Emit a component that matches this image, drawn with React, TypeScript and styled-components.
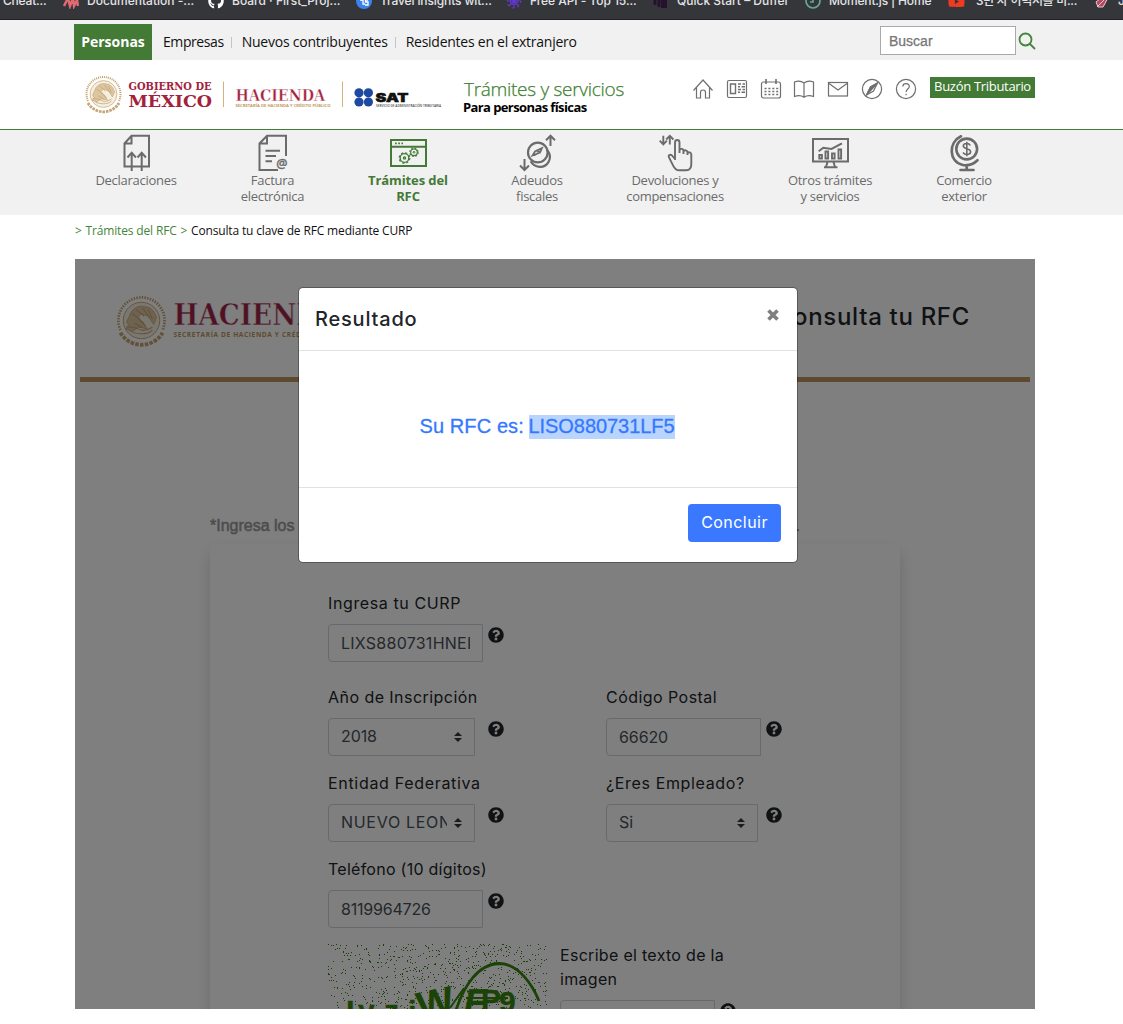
import React from 'react';
import styled, { createGlobalStyle } from 'styled-components';
import { FaGithub, FaQuestionCircle, FaYoutube } from 'react-icons/fa';

const sans = '"Open Sans", "Noto Sans", sans-serif';
const geometric = 'Inter, sans-serif';
const helvetica = '"Liberation Sans", Arial, sans-serif';
const green = '#437a36';

const Global = createGlobalStyle`
  *, *::before, *::after { box-sizing: border-box; }
  body { margin: 0; background: #fff; }
  svg { display: block; flex: none; }
`;

const Page = styled.div`
  width: 1123px;
  height: 1024px;
  overflow: hidden;
  font-family: ${sans};
  color: #111;
`;

/* ---------- bookmarks ---------- */
const Bookmarks = styled.div`
  height: 20px;
  overflow: hidden;
  display: flex;
  align-items: flex-start;
  background: #35363a;
  border-bottom: 1px solid #231f22;
`;
const Bookmark = styled.div<{ $w: number; $ls?: number }>`
  flex: none;
  width: ${p => p.$w}px;
  height: 18px;
  margin-top: -8px;
  display: flex;
  align-items: center;
  gap: 8px;
  white-space: nowrap;
  color: #e3e4e6;
  font: 500 12px/18px Inter, "Noto Sans CJK KR", sans-serif;
  letter-spacing: ${p => p.$ls ?? 0}px;
`;

/* ---------- top bar ---------- */
const Wrap = styled.div`
  width: 960px;
  margin-left: 75px;
`;
const TopBar = styled.div`
  height: 40px;
  background: #f1f1f1;
`;
const TopInner = styled(Wrap)`
  height: 40px;
  display: flex;
  align-items: flex-end;
  width: 962px;
  margin-left: 74px;
`;
const ActiveTab = styled.div`
  width: 78px;
  height: 36px;
  background: ${green};
  color: #fff;
  font-weight: 700;
  font-size: 14px;
  line-height: 36px;
  text-align: center;
`;
const Links = styled.div`
  display: flex;
  align-items: center;
  height: 36px;
  margin-left: 11px;
  flex: 1;
`;
const TopLink = styled.a<{ $ls: number }>`
  font-size: 14px;
  line-height: 36px;
  letter-spacing: ${p => p.$ls}px;
  white-space: nowrap;
`;
const Divider = styled.i`
  width: 1px;
  height: 11px;
  margin: 0 10px 0 7px;
  background: #c4c4c4;
`;
const Search = styled.div`
  height: 36px;
  display: flex;
  align-items: flex-start;
  padding-top: 2px;
  gap: 2px;
`;
const SearchBox = styled.div`
  width: 136px;
  height: 29px;
  border: 1px solid #a9a9a9;
  background: #fff;
  color: #757575;
  padding: 1px 0 0 8px;
  font: 14px/27px ${helvetica};
  -webkit-text-stroke: 0.25px #757575;
`;
const SearchIcon = styled.svg`
  margin-top: 6px;
`;

/* ---------- header ---------- */
const Header = styled.header`
  height: 70px;
  border-bottom: 1px solid ${green};
`;
const HeaderInner = styled(Wrap)`
  display: flex;
  height: 69px;
`;
const SectionTitle = styled.div`
  width: 241px;
  padding: 18px 0 0 13px;
`;
const Title = styled.div`
  color: #3f7f33;
  font-size: 19px;
  font-weight: 300;
  line-height: 22px;
  letter-spacing: -0.29px;
  -webkit-text-stroke: 0.25px #3f7f33;
`;
const Subtitle = styled.div`
  margin-left: -1px;
  font-size: 13px;
  line-height: 15px;
  font-weight: 700;
  letter-spacing: -0.6px;
  color: #000;
`;
const Tools = styled.div`
  display: flex;
  gap: 11.8px;
  padding-top: 18px;
`;
const Mailbox = styled.div`
  width: 105px;
  height: 21px;
  margin: 17px 0 0 auto;
  background: ${green};
  color: #fff;
  font-size: 13px;
  line-height: 19px;
  letter-spacing: -0.3px;
  text-align: center;
  white-space: nowrap;
`;

/* ---------- section nav ---------- */
const Nav = styled.nav`
  height: 85px;
  background: #f1f1f1;
  padding: 4px 0 0 75px;
  display: flex;
`;
const NavItem = styled.div<{ $w: number; $active?: boolean }>`
  width: ${p => p.$w}px;
  display: flex;
  flex-direction: column;
  align-items: center;
  text-align: center;
  white-space: pre-line;
  font-size: 13px;
  line-height: 16px;
  letter-spacing: ${p => (p.$active ? -0.1 : -0.28)}px;
  font-weight: ${p => (p.$active ? 700 : 400)};
  color: ${p => (p.$active ? green : '#6b6b6b')};
`;
const Breadcrumb = styled.div`
  height: 44px;
  padding: 7px 0 0 75px;
  display: flex;
  gap: 3.8px;
  font-size: 12px;
  line-height: 17px;
  letter-spacing: -0.15px;
`;
const Crumb = styled.span<{ $link?: boolean }>`
  color: ${p => (p.$link ? '#43853a' : '#111')};
  white-space: nowrap;
`;

/* ---------- embedded application ---------- */
const Frame = styled(Wrap)`
  height: 750px;
  position: relative;
  overflow: hidden;
  background: #fff;
`;
const Brand = styled.div`
  height: 118px;
  display: flex;
  justify-content: space-between;
  align-items: flex-start;
  padding: 32px 65px 0 38px;
`;
const AppTitle = styled.div`
  margin-top: 11px;
  font: 500 24px/30px ${geometric};
  letter-spacing: 0.69px;
  color: #212529;
`;
const GoldRule = styled.div`
  height: 5px;
  margin: 0 5px;
  background: #bc955c;
`;
const Note = styled.div`
  display: flex;
  justify-content: space-between;
  width: 590px;
  margin: 134px 0 0 135px;
  height: 28px;
  color: #989898;
  font: 16px/20px ${helvetica};
  -webkit-text-stroke: 0.5px #989898;
`;
const Card = styled.div`
  width: 690px;
  height: 600px;
  margin-left: 135px;
  padding: 47px 0 0 118px;
  border-radius: 5px;
  background: #fff;
  box-shadow: 0 8px 16px rgba(0, 0, 0, 0.15);
`;
const Row = styled.div<{ $gap: number }>`
  display: flex;
  margin-bottom: ${p => p.$gap}px;
`;
const Field = styled.div`
  width: 278px;
`;
const Label = styled.div<{ $ls: number }>`
  margin-bottom: 9px;
  font: 16px/24px ${geometric};
  letter-spacing: ${p => p.$ls}px;
  color: #212529;
`;
const Control = styled.div`
  display: flex;
  width: 176px;
  justify-content: space-between;
  align-items: flex-start;
  color: #212529;
`;
const Box = styled.div<{ $w: number; $ls?: number; $select?: boolean }>`
  width: ${p => p.$w}px;
  height: 38px;
  padding: 0 12px;
  display: flex;
  align-items: center;
  justify-content: space-between;
  gap: 7px;
  border: 1px solid #ced4da;
  border-radius: 4px 0 0 4px;
  font: 16px/${p => (p.$select ? 34 : 36)}px ${geometric};
  letter-spacing: ${p => p.$ls ?? 0}px;
  color: #495057;
`;
const Value = styled.span`
  align-self: flex-start;
  overflow: hidden;
  white-space: nowrap;
  min-width: 0;
`;
const Help = styled(FaQuestionCircle)`
  margin-top: 3px;
`;
const Captcha = styled.svg`
  margin: 1px 12px 0 0;
`;

/* ---------- dialog ---------- */
const Backdrop = styled.div`
  position: absolute;
  inset: 0;
  background: rgba(0, 0, 0, 0.5);
  padding: 28px 0 0 223px;
`;
const Dialog = styled.div`
  width: 500px;
  height: 276px;
  border: 1px solid rgba(0, 0, 0, 0.3);
  border-radius: 5px;
  background: #fff;
  background-clip: padding-box;
  display: flex;
  flex-direction: column;
`;
const DialogHead = styled.div`
  height: 63px;
  display: flex;
  justify-content: space-between;
  padding: 16px 18px 0 16px;
  border-bottom: 1px solid #dee2e6;
  font: 500 20px/30px ${geometric};
  letter-spacing: 0.8px;
  color: #212529;
`;
const Close = styled.svg`
  margin-top: 5px;
`;
const DialogBody = styled.div`
  height: 136px;
  display: flex;
  justify-content: center;
  align-items: flex-start;
  padding: 64px 2px 0 0;
  color: #3578ff;
  font: 20px/23px ${helvetica};
  -webkit-text-stroke: 0.3px #3578ff;
`;
const Prefix = styled.span`
  width: 109px;
  letter-spacing: 0.1px;
  white-space: pre;
`;
const Selected = styled.mark`
  width: 146px;
  height: 24px;
  background: #b9d5fe;
  color: inherit;
  letter-spacing: -0.06px;
`;
const DialogFoot = styled.div`
  flex: 1;
  border-top: 1px solid #dee2e6;
  padding: 16px;
  display: flex;
  justify-content: flex-end;
`;
const Primary = styled.button`
  width: 93px;
  height: 38px;
  border: 0;
  padding: 0 0 2px;
  border-radius: 4px;
  background: #3a79ff;
  color: #fff;
  font: 16px/36px ${geometric};
  letter-spacing: 0.45px;
`;

/* ---------- drawings ---------- */
const serif = '"DejaVu Serif Condensed", "DejaVu Serif", serif';

function Seal() {
  return (
    <g fill="none" stroke="#c6a573">
      <path d="M-15.500 7A17 17 0 1 1 15.500 7" strokeWidth="2" strokeDasharray="1.100 0.900" />
      <path d="M-15.500 9A18 18 0 0 0 15.500 9" strokeWidth="2.800" strokeDasharray="2.600 0.900" />
      <circle r="13.400" fill="#f5eee2" strokeWidth="0.700" />
      <path d="M-9-3c1-5 7-9 12-7 4 0 7 4 8 8l-2 5-4-6-5-2-3 3 4 3 3 5-6-1-5 3-5-2 3-2-2-3z" fill="#dcc6a0" strokeWidth="0.600" />
      <path d="M-11 4c3 2 5 0 8 2s6 2 11-1M-8 8c4 2 12 3 16-1M-7-5l6 4M-4-8l6 5M1-9l5 7M5-8l3 7M-5 2l5 3M-2-1l5 5" strokeWidth="0.800" />
    </g>
  );
}

function GovLogos() {
  return (
    <svg width="376" height="68" viewBox="75 60 376 68">
      <g transform="translate(103.5 94)"><Seal /></g>
      <g fill="#a3213c" fontFamily={serif} fontWeight="700">
        <text x="128.5" y="89.5" fontSize="11" textLength="83" lengthAdjust="spacingAndGlyphs">GOBIERNO DE</text>
        <text x="128.5" y="106.5" fontSize="17.500" textLength="83.500" lengthAdjust="spacingAndGlyphs">MÉXICO</text>
        <text x="235.5" y="101" fontSize="16.500" textLength="89.500" lengthAdjust="spacingAndGlyphs" stroke="#fff" strokeWidth="0.400">HACIENDA</text>
      </g>
      <text x="235.5" y="106.500" fontSize="3.800" fontWeight="700" fill="#c19a5c" fontFamily="Open Sans" textLength="95" lengthAdjust="spacingAndGlyphs">SECRETARÍA DE HACIENDA Y CRÉDITO PÚBLICO</text>
      <path d="M223.500 81.500V107M342.500 81.500V107" stroke="#d3b27c" />
      <g fill="#1d4aa0">
        <circle cx="359" cy="92.800" r="4.600" /><circle cx="368.400" cy="92.800" r="4.600" />
        <circle cx="359" cy="102" r="4.600" /><circle cx="368.400" cy="102" r="4.600" />
      </g>
      <text x="375.500" y="101.800" fontSize="12" fontWeight="900" fill="#111" stroke="#111" strokeWidth="0.500" fontFamily="Inter" textLength="33" lengthAdjust="spacingAndGlyphs">SAT</text>
      <text x="376" y="106.500" fontSize="2.800" fontWeight="600" fill="#444" fontFamily="Open Sans" textLength="65" lengthAdjust="spacingAndGlyphs">SERVICIO DE ADMINISTRACIÓN TRIBUTARIA</text>
    </svg>
  );
}

function TreasuryLogo() {
  return (
    <svg width="240" height="60" viewBox="113 291 240 60">
      <g transform="translate(141.500 320.500) scale(1.360)"><Seal /></g>
      <text x="173.500" y="325" fontSize="30" fontWeight="700" fill="#9d2449" stroke="#fff" strokeWidth="0.500" fontFamily={serif} textLength="166" lengthAdjust="spacingAndGlyphs">HACIENDA</text>
      <text x="173.500" y="337" fontSize="6.600" fontWeight="700" fill="#bc955c" fontFamily="Open Sans" textLength="176" lengthAdjust="spacing">SECRETARÍA DE HACIENDA Y CRÉDITO PÚBLICO</text>
    </svg>
  );
}

const toolIcons: React.ReactNode[] = [
  <path d="M1.500 12.500 11 2l9.500 10.500M4.500 9.500V20h4v-5.500a2.500 2.500 0 0 1 5 0V20h4V9.500" />,
  <><rect x="1.500" y="2.500" width="19" height="17" rx="1.500" /><path d="M4.500 6h5v9.500h-5zM12 6h3m1.500 0H19M12 8.800h2m1.500 0H19M12 11.500h3m1.500 0H19M12 14.200h2m1.500 0H19" strokeWidth="1.400" /></>,
  <><rect x="1.500" y="4" width="19" height="16" rx="2" /><path d="M6 1v5M16 1v5" strokeWidth="1.600" /><path d="M4.500 10.500h14M4.500 13.500h14M4.500 16.500h14" strokeWidth="1.700" strokeDasharray="2 1.900" /></>,
  <path d="M11 5C8 2.700 4 3 1.500 4v14.500c3-1 7-1 9.500.800 2.500-1.800 6.500-1.800 9.500-.800V4C18 3 14 2.700 11 5zM11 5v14" />,
  <><rect x="1.500" y="4.500" width="19" height="13.500" /><path d="m2 5.500 9 6.500 9-6.500" /></>,
  <><circle cx="11" cy="11" r="9.600" /><path d="M16.500 5 12.500 13 5.500 17 9.500 9z" /><path d="M16.500 5 9.500 9l-4 8 5.500-6z" fill="#6f6f6f" /></>,
  <><circle cx="11" cy="11" r="9.600" /><path d="M7.800 8.500c.2-4 6.600-3.800 6.500 0-.1 2.500-3.200 2.500-3.200 5.500M11.100 15.700v1.500" /></>,
];

function ToolIcon({ children }: { children: React.ReactNode }) {
  return <svg width="22" height="22" viewBox="0 0 22 22" fill="none" stroke="#6f6f6f" strokeWidth="1.200">{children}</svg>;
}

interface Section { label: string; width: number; active?: boolean; art: React.ReactNode }
const sections: Section[] = [
  { label: 'Declaraciones', width: 122, art: <><path d="M15.500 1.800H33V32.500H8.500V9.500zV9.500H8.500" /><path d="M15.700 37V19M11.500 23.500l4.200-4.800 4.200 4.800M25.700 37V19M21.500 23.500l4.200-4.800 4.200 4.800" /></> },
  { label: 'Factura\nelectrónica', width: 151, art: <><path d="M25 36H6.500V9.500L14 1.800H33V22M14 1.800V9.500H6.500M12.500 16.700H27M12.500 21.900H23M12.500 27.300H19" /><text x="23.300" y="33.500" fontSize="12.500" stroke="currentColor" strokeWidth="0.300" fill="currentColor" fontWeight="600" fontFamily="Open Sans">@</text></> },
  { label: 'Trámites del\nRFC', width: 120, active: true, art: <><path d="M3 6H38V32H3zM3 12.800H38" /><path d="M7 9.400h8" strokeDasharray="1.700 1.500" strokeWidth="1.600" /><circle cx="16.500" cy="24" r="4.300" strokeWidth="1.300" /><circle cx="16.500" cy="24" r="5.300" strokeWidth="1.200" strokeDasharray="2.200 1.960" /><circle cx="16.500" cy="24" r="1.100" strokeWidth="1.300" /><circle cx="26" cy="18.300" r="3.300" strokeWidth="1.200" /><circle cx="26" cy="18.300" r="4.200" strokeWidth="1.100" strokeDasharray="1.800 1.500" /><circle cx="26" cy="18.300" r="0.900" strokeWidth="1" /></> },
  { label: 'Adeudos\nfiscales', width: 138, art: <><circle cx="20.800" cy="18.500" r="9.800" strokeWidth="2.200" /><path d="M30.500 16.500c6 8-.5 16.800-8 16.300-4-.3-7-2-8.800-5.500" strokeWidth="2.200" /><path d="m15.500 21.500 2.500-4 7-3.500-2 4.500zM19 16.500l5 1.500M17 21.500l4-2.500" strokeWidth="1.700" /><path d="M33.500 12V2M29 6.300 33.500 1.700 38 6.300M7.500 25V36M3 31.500 7.500 36l4.500-4.500" /></> },
  { label: 'Devoluciones y\ncompensaciones', width: 138, art: <><path d="M8.300 1.700V10M4.700 6.700l3.600 3.600 3.600-3.600M14.800 10.500V2M11.200 5.500l3.600-3.600 3.600 3.600" strokeWidth="1.900" /><path d="M20 26V8.500c0-3.300 4.500-3.300 4.500 0V19M24.500 18v-1.500c.5-2.400 4-2 4 .5V20M28.500 17.500c.8-2 4-1.300 4 1V21M32.500 19c1-1.500 3.800-.7 3.800 1.500V30c0 4-2 6.300-5 6.300H24c-3 0-4.500-2-6-5l-4-8c-1.300-2.600 2-3.500 3.500-1.300L20 25" strokeWidth="1.900" /></> },
  { label: 'Otros trámites\ny servicios', width: 172, art: <><path d="M3 5H38V27.500H3zM17.500 28l-1.500 5M23.500 28l1.500 5M14 33.200H27.500" /><path d="M9.300 21h2.600v3.500H9.300zM15.500 17.500h2.600v7h-2.600zM22 19.500h2.600v5H22zM28.500 15.500h2.600v9h-2.600z" strokeWidth="1.900" /><path d="m8.700 17.300 4.600-3.500L21.500 15 32 9.300" strokeWidth="2" /></> },
  { label: 'Comercio\nexterior', width: 96, art: <><circle cx="22.700" cy="15" r="10.400" strokeWidth="2.600" /><path d="M17 2.300C4 8.500 5 27.500 18 30.700c6 1.500 11.500-.5 15.500-4.400M22.700 31v5M16.500 36h13" strokeWidth="2.700" strokeLinecap="round" /><path d="M26.300 11.500c-1.300-2.800-7-2.600-7 .6 0 3.500 7.300 2 7.300 5.700 0 3.300-6 3.500-7.600.7M22.800 7.700v14.600" strokeWidth="1.600" /></> },
];

function SortArrows() {
  return <svg width="8" height="10" viewBox="0 0 8 10" fill="#343a40"><path d="M0 4 4 0l4 4zM0 6h8L4 10z" /></svg>;
}

function noise() {
  let s = 71;
  const next = () => (s = (s * 16807) % 2147483647) / 2147483647;
  let d = '';
  for (let i = 0; i < 720; i++) d += `M${Math.floor(next() * 219)} ${Math.floor(next() * 65)}h1v1h-1z`;
  return d;
}
const dots = noise();

function CaptchaImage() {
  return (
    <Captcha width="220" height="80" viewBox="0 0 220 80">
      <path d={dots} fill="#35800f" shapeRendering="crispEdges" />
      <path d="M128 66C136 42 150 20 171 19.500 191 19.500 205 42 211 57" fill="none" stroke="#37860c" strokeWidth="2.800" />
      <path d="M139 47.500h31M138 54h42M122 64l14-20" stroke="#37860c" strokeWidth="2" />
      <g fill="#37860c" stroke="#37860c" strokeWidth="0.300" fontFamily="Liberation Sans" fontWeight="700">
        <text x="18" y="79" fontSize="31">L</text>
        <text x="30" y="77" fontSize="30">y</text>
        <text x="56" y="77" fontSize="30">z</text>
        <text x="80" y="79" fontSize="31">i</text>
        <text transform="translate(92 76) rotate(-12)" fontSize="39">W</text>
        <text transform="translate(134 70) skewX(-12)" fontSize="36">F</text>
        <text x="153" y="66" fontSize="30">P</text>
        <text x="171" y="68" fontSize="30">9</text>
      </g>
    </Captcha>
  );
}

function Input({ value, width = 155, ls, select }: { value: string; width?: number; ls?: number; select?: boolean }) {
  return (
    <Control>
      <Box $w={width} $ls={ls} $select={select}>
        <Value>{value}</Value>
        {select && <SortArrows />}
      </Box>
      <Help size={16} />
    </Control>
  );
}

export default function App() {
  return (
    <Page>
      <Global />
      <Bookmarks>
        <Bookmark $w={63} $ls={-0.2}><span>&nbsp;Cheat...</span></Bookmark>
        <Bookmark $w={145}><svg width="16" height="16" viewBox="0 0 16 16" fill="none" stroke="#e06a72" strokeWidth="2.500"><path d="m1 13 4-8 2 8 3-8 1 8 3-6 1 6" /></svg>Documentation -...</Bookmark>
        <Bookmark $w={148}><FaGithub size={16} color="#fff" />Board · First_Proj...</Bookmark>
        <Bookmark $w={150} $ls={-0.12}><svg width="16" height="16" viewBox="0 0 16 16"><circle cx="8" cy="8" r="8" fill="#3b82f0" /><path d="M4 7h3v4h2M12 7H9.500v2H12v3H9" stroke="#fff" fill="none" strokeWidth="1.300" /></svg>Travel insights wit...</Bookmark>
        <Bookmark $w={147} $ls={-0.05}><svg width="16" height="16" viewBox="0 0 16 16" fill="none" stroke="#6536d8" strokeWidth="1.100"><path d="M8 1v14M1 8h14M3 3l10 10M13 3 3 13" /><circle cx="8" cy="8" r="3.500" /><circle cx="8" cy="8" r="7" strokeDasharray="2 3.500" /></svg>Free API - Top 15...</Bookmark>
        <Bookmark $w={152}><svg width="16" height="16" viewBox="0 0 16 16" stroke="#24122c" strokeWidth="3"><path d="M2 5v7M6 3v11" /><path d="M11 2v13" strokeWidth="6" /></svg>Quick Start – Duffel</Bookmark>
        <Bookmark $w={143} $ls={-0.15}><svg width="16" height="16" viewBox="0 0 16 16" fill="none" stroke="#63a79b" strokeWidth="1.700"><circle cx="8" cy="8" r="7" /><path d="M8 4v5H5" /></svg>Moment.js | Home</Bookmark>
        <Bookmark $w={146} $ls={-0.3}><FaYoutube size={17} color="#f03a22" /><span>&nbsp;3년 차 이력서를 비...</span></Bookmark>
        <Bookmark $w={40}><svg width="16" height="16" viewBox="0 0 16 16" fill="#b54860" stroke="#e8c8d0"><path d="M2 9 11 2l3 3-5 9H4z" /><path d="m3 14 8-8" /></svg>J</Bookmark>
      </Bookmarks>

      <TopBar>
        <TopInner>
          <ActiveTab>Personas</ActiveTab>
          <Links>
            <TopLink $ls={-0.42}>Empresas</TopLink><Divider />
            <TopLink $ls={-0.23}>Nuevos contribuyentes</TopLink><Divider />
            <TopLink $ls={-0.25}>Residentes en el extranjero</TopLink>
          </Links>
          <Search>
            <SearchBox>Buscar</SearchBox>
            <SearchIcon width="18" height="18" viewBox="0 0 18 18" fill="none" stroke="#43853a" strokeWidth="1.800"><circle cx="7.500" cy="7.500" r="6" /><path d="m12 12 5 5" /></SearchIcon>
          </Search>
        </TopInner>
      </TopBar>

      <Header>
        <HeaderInner>
          <GovLogos />
          <SectionTitle>
            <Title>Trámites y servicios</Title>
            <Subtitle>Para personas físicas</Subtitle>
          </SectionTitle>
          <Tools>{toolIcons.map((icon, i) => <ToolIcon key={i}>{icon}</ToolIcon>)}</Tools>
          <Mailbox>Buzón Tributario</Mailbox>
        </HeaderInner>
      </Header>

      <Nav>
        {sections.map(s => (
          <NavItem key={s.label} $w={s.width} $active={s.active}>
            <svg width="40" height="38" viewBox="0 0 40 38" fill="none" stroke="currentColor" strokeWidth="2">{s.art}</svg>
            {s.label}
          </NavItem>
        ))}
      </Nav>

      <Breadcrumb>
        <Crumb $link>&gt;</Crumb>
        <Crumb $link>Trámites del RFC</Crumb>
        <Crumb $link>&gt;</Crumb>
        <Crumb>Consulta tu clave de RFC mediante CURP</Crumb>
      </Breadcrumb>

      <Frame>
        <Brand>
          <TreasuryLogo />
          <AppTitle>Consulta tu RFC</AppTitle>
        </Brand>
        <GoldRule />
        <Note><span>*Ingresa los</span><span>.</span></Note>
        <Card>
          <Row $gap={23}>
            <Field><Label $ls={0.61}>Ingresa tu CURP</Label><Input value="LIXS880731HNEL" ls={0.25} /></Field>
          </Row>
          <Row $gap={15}>
            <Field><Label $ls={0.45}>Año de Inscripción</Label><Input value="2018" width={147} ls={-0.1} select /></Field>
            <Field><Label $ls={0.45}>Código Postal</Label><Input value="66620" ls={-0.1} /></Field>
          </Row>
          <Row $gap={15}>
            <Field><Label $ls={0.68}>Entidad Federativa</Label><Input value="NUEVO LEON" width={147} ls={0.7} select /></Field>
            <Field><Label $ls={0.64}>¿Eres Empleado?</Label><Input value="Si" width={152} select /></Field>
          </Row>
          <Row $gap={15}>
            <Field><Label $ls={0.26}>Teléfono (10 dígitos)</Label><Input value="8119964726" ls={-0.2} /></Field>
          </Row>
          <Row $gap={0}>
            <CaptchaImage />
            <Field><Label $ls={0.3}>Escribe el texto de la<br />imagen</Label><Input value="" /></Field>
          </Row>
        </Card>
        <Backdrop>
          <Dialog>
            <DialogHead>
              Resultado
              <Close width="12" height="12" viewBox="0 0 12 12" stroke="#7f7f7f" strokeWidth="3.600"><path d="m1.500 1.500 9 9M10.500 1.500l-9 9" /></Close>
            </DialogHead>
            <DialogBody><Prefix>Su RFC es: </Prefix><Selected>LISO880731LF5</Selected></DialogBody>
            <DialogFoot><Primary>Concluir</Primary></DialogFoot>
          </Dialog>
        </Backdrop>
      </Frame>
    </Page>
  );
}
